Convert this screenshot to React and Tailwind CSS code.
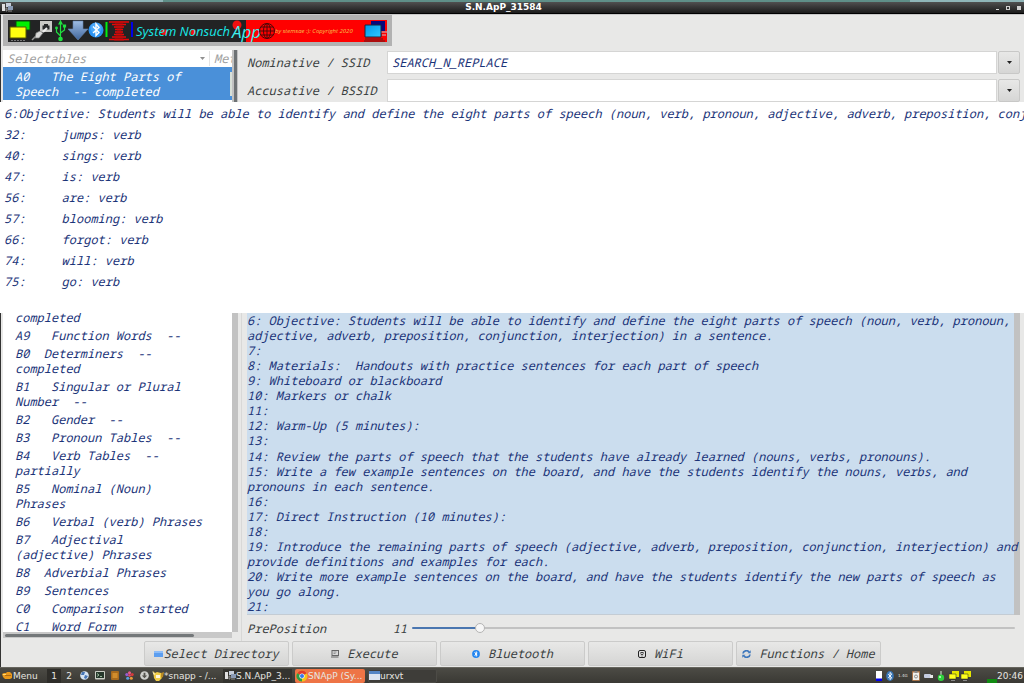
import React, { useState } from 'react';

const MATCHES = [
  '6:Objective: Students will be able to identify and define the eight parts of speech (noun, verb, pronoun, adjective, adverb, preposition, conjunction, interjection) in a sentence.',
  '32:     jumps: verb',
  '40:     sings: verb',
  '47:     is: verb',
  '56:     are: verb',
  '57:     blooming: verb',
  '66:     forgot: verb',
  '74:     will: verb',
  '75:     go: verb',
];

const TOPICS = [
  'completed',
  'A9   Function Words  --',
  'B0  Determiners  --\ncompleted',
  'B1   Singular or Plural\nNumber  --',
  'B2   Gender  --',
  'B3   Pronoun Tables  --',
  'B4   Verb Tables  --\npartially',
  'B5   Nominal (Noun)\nPhrases',
  'B6   Verbal (verb) Phrases',
  'B7   Adjectival\n(adjective) Phrases',
  'B8  Adverbial Phrases',
  'B9  Sentences',
  'C0   Comparison  started',
  'C1   Word Form',
];

const LESSON = [
  '6: Objective: Students will be able to identify and define the eight parts of speech (noun, verb, pronoun,\nadjective, adverb, preposition, conjunction, interjection) in a sentence.',
  '7:',
  '8: Materials:  Handouts with practice sentences for each part of speech',
  '9: Whiteboard or blackboard',
  '10: Markers or chalk',
  '11:',
  '12: Warm-Up (5 minutes):',
  '13:',
  '14: Review the parts of speech that the students have already learned (nouns, verbs, pronouns).',
  '15: Write a few example sentences on the board, and have the students identify the nouns, verbs, and\npronouns in each sentence.',
  '16:',
  '17: Direct Instruction (10 minutes):',
  '18:',
  '19: Introduce the remaining parts of speech (adjective, adverb, preposition, conjunction, interjection) and\nprovide definitions and examples for each.',
  '20: Write more example sentences on the board, and have the students identify the new parts of speech as\nyou go along.',
  '21:',
];

const ACTIONS = [
  { label: 'Select Directory', icon: FolderIcon, gap: 'gap-0' },
  { label: 'Execute', icon: DriveIcon, gap: 'gap-2' },
  { label: 'Bluetooth', icon: BluetoothDot, gap: 'gap-2' },
  { label: 'WiFi', icon: WifiIcon, gap: 'gap-2' },
  { label: 'Functions / Home', icon: RefreshIcon, gap: 'gap-2' },
];

export default function App() {
  return (
    <div className="flex h-screen flex-col overflow-hidden bg-[#e8e8e7] font-['Noto_Sans_Mono','DejaVu_Sans_Mono',monospace] text-[12px] leading-[15px] text-[#1a3378] italic">
      <div className="flex h-0.5 shrink-0">
        <div className="w-[163px] bg-[#8fb5b8]" />
        <div className="flex-1 bg-[#5f8f88]" />
        <div className="w-[114px] bg-[#8fb5b8]" />
      </div>
      <TitleBar />
      <TopPane />
      <MatchList />
      <BottomPane />
      <ActionBar />
      <TaskBar />
    </div>
  );
}

function TitleBar() {
  return (
    <header className="flex h-3 shrink-0 items-center border-b border-black bg-gradient-to-b from-[#505050] to-[#1c1c1c] px-0.5 font-['DejaVu_Sans',sans-serif] text-[9px] leading-[11px] not-italic text-white">
      <div className="flex-1">
        <AppIcon />
      </div>
      <h1 className="mr-4 font-bold">S.N.ApP_31584</h1>
      <div className="flex flex-1 items-center justify-end gap-[7px] pr-px">
        <button aria-label="Minimize" className="h-1 w-[3px] border-b border-[#e0e0e0]" />
        <button aria-label="Maximize" className="size-1 border border-[#d0d0d0]" />
        <button aria-label="Close" className="size-1 bg-[#d0d0d0]" />
      </div>
    </header>
  );
}

function TopPane() {
  return (
    <section className="flex h-[88px] shrink-0 flex-col overflow-hidden border-t border-l border-t-[#c8c8c8] border-l-[#333]">
      <div className="ml-0.5 flex h-[31px] w-[389px] shrink-0 items-center bg-[#b2b2b2] px-[5px]">
        <Banner />
      </div>
      <div className="mt-0.5 flex min-h-0 flex-1 gap-2 pl-0.5">
        <div className="mt-0.5 flex w-[235px] shrink-0">
          <div className="flex min-w-0 flex-1 flex-col bg-white">
            <div className="flex h-[17px] shrink-0 items-center text-[#a0a0a0]">
              <button className="flex flex-1 items-center justify-between border-r border-[#e4e4e4] pr-1 pl-1 text-left italic">
                Selectables
                <Caret className="text-[#909090]" />
              </button>
              <button className="w-[22px] overflow-hidden pl-1 text-left italic">Met</button>
            </div>
            <button className="flex h-[33px] shrink-0 items-center justify-between bg-[#4a90d9] pl-3 text-left whitespace-pre text-white italic">
              {'A0   The Eight Parts of\nSpeech  -- completed'}
              <span className="h-6 w-0.5 bg-[#d8e0d8]" />
            </button>
          </div>
          <div className="flex w-1.5 justify-center bg-[#c2c2c2]">
            <div className="w-[3px] bg-[#6e7274]" />
          </div>
        </div>
        <div className="flex min-w-0 flex-1 flex-col gap-[5px] pt-[3px] pr-1 pl-px">
          <ComboRow id="nominative" label="Nominative / SSID" initial="SEARCH_N_REPLACE" />
          <ComboRow id="accusative" label="Accusative / BSSID" initial="" />
        </div>
      </div>
    </section>
  );
}

function ComboRow({ id, label, initial }) {
  const [value, setValue] = useState(initial);
  return (
    <div className="flex h-[23px] shrink-0 items-center">
      <label htmlFor={id} className="w-[140px] text-[#3a3f41]">{label}</label>
      <input
        id={id}
        value={value}
        onChange={e => setValue(e.target.value)}
        className="h-[23px] min-w-0 flex-1 border border-[#d5d5d4] bg-white px-1 italic outline-none"
      />
      <button
        aria-label={`${label} history`}
        className="ml-px flex h-[23px] w-[22px] items-center justify-center rounded-xs border border-[#c8c8c7] bg-gradient-to-b from-[#e8e8e7] to-[#d6d6d5]"
      >
        <Caret className="text-[#222]" />
      </button>
    </div>
  );
}

function MatchList() {
  return (
    <ul className="h-[211px] shrink-0 overflow-hidden bg-white pt-px pl-1">
      {MATCHES.map(m => (
        <li key={m} className="leading-[21px] whitespace-pre">{m}</li>
      ))}
    </ul>
  );
}

function BottomPane() {
  return (
    <section className="flex min-h-0 flex-1 border-l border-[#333] pl-0.5">
      <div className="flex w-[235px] shrink-0 flex-col pb-[3px]">
        <div className="flex min-h-0 flex-1">
          <ul className="-mt-[3px] min-w-0 flex-1 overflow-hidden bg-white pl-3 [clip-path:inset(3px_0_0_0)]">
            {TOPICS.map(t => (
              <li key={t} className="pb-[3px] whitespace-pre">{t}</li>
            ))}
          </ul>
          <div className="w-1.5 bg-[#c2c2c2]" />
        </div>
        <div className="mr-1.5 flex h-1.5 shrink-0 items-center bg-[#c8c8c8] pl-0.5">
          <div className="h-[3px] w-[189px] rounded-full bg-[#737779]" />
        </div>
      </div>
      <div className="ml-[3px] flex min-w-0 flex-1 flex-col border-l border-[#d8d8d7] pr-1 pl-[5px]">
        <div className="flex min-h-0 flex-1">
          {/* sits above the scrollbar so the longest line stays readable */}
          <div className="z-10 flex min-w-0 flex-1 flex-col justify-between border-b border-[#c4ccd4] bg-[#cbddee]">
            {LESSON.map(line => (
              <p key={line} className="whitespace-pre">{line}</p>
            ))}
          </div>
          <div className="w-1.5 bg-[#c2c2c2]" />
        </div>
        <PrePosition />
      </div>
    </section>
  );
}

function PrePosition() {
  const [value, setValue] = useState(11);
  const max = 103;
  const filled = (value / max) * 100;
  return (
    <div className="flex h-[26px] shrink-0 items-center text-[#3a3f41]">
      <label htmlFor="preposition" className="flex-1">PrePosition</label>
      <output htmlFor="preposition" className="mr-[5px]">{value}</output>
      <input
        id="preposition"
        type="range"
        min={0}
        max={max}
        value={value}
        onChange={e => setValue(Number(e.target.value))}
        className="mr-[5px] h-0.5 w-[78%] appearance-none rounded-full [&::-webkit-slider-thumb]:size-2.5 [&::-webkit-slider-thumb]:appearance-none [&::-webkit-slider-thumb]:rounded-full [&::-webkit-slider-thumb]:border [&::-webkit-slider-thumb]:border-[#b4b4b4] [&::-webkit-slider-thumb]:bg-[#f6f6f6]"
        style={{ background: `linear-gradient(to right, #4a76b0 ${filled}%, #c2c2c2 ${filled}%)` }}
      />
    </div>
  );
}

function ActionBar() {
  return (
    <div className="flex h-[26px] shrink-0 justify-center gap-[3px] border-l border-[#333] pb-px">
      {ACTIONS.map(({ label, icon: Icon, gap }) => (
        <button
          key={label}
          className={`flex w-[145px] items-center justify-center rounded-xs border border-[#cbcbca] bg-gradient-to-b from-[#e8e8e7] to-[#d5d5d4] whitespace-nowrap text-[#3a3f41] italic ${gap}`}
        >
          <Icon />
          {label}
        </button>
      ))}
    </div>
  );
}

function TaskBar() {
  return (
    <footer className="flex h-4 shrink-0 items-center border-t border-[#66655e] bg-gradient-to-b from-[#4c4b45] to-[#3a3934] font-['DejaVu_Sans',sans-serif] text-[9px] leading-3 not-italic text-[#e6e5e0]">
      <button className="ml-0.5 flex w-[45px] items-center gap-px">
        <svg viewBox="0 0 10 8" className="h-2 w-2.5">
          <path d="M0 2 2 1 4 1 5 0 8 0 10 2V6L8 7H3L1 5Z" fill="#e8981c" />
          <path d="M3 3H9V4H3Z" fill="#b06a10" />
          <path d="M1 2H4V3H1Z" fill="#ffd770" />
        </svg>
        Menu
      </button>
      <button className="h-3.5 w-[14px] bg-[#2e2d29]">1</button>
      <button className="h-3.5 w-4">2</button>
      <div className="ml-[3px] flex w-[72px] items-center gap-1.5">
        <svg viewBox="0 0 9 9" className="size-[9px]">
          <circle cx="4.500" cy="4.500" r="4.300" fill="#d5e2f2" />
          <path d="M2 1 5 1 4 4 1 4ZM5 4 8 5 6 8 4 7Z" fill="#4675b5" />
        </svg>
        <svg viewBox="0 0 10 9" className="h-[9px] w-2.5">
          <rect width="10" height="8.500" rx="1" fill="#c8ccc4" />
          <rect x="1" y="1" width="8" height="6" fill="#26382c" />
          <path d="M2 2.500 4 4 2 5.500M5 5.500H7" stroke="#b8d8b8" fill="none" strokeWidth=".8" />
        </svg>
        <svg viewBox="0 0 8 9" className="h-[9px] w-2">
          <rect width="8" height="9" rx="1" fill="#a86a1c" />
          <path d="M1.500 2H6.500V7H1.500Z" fill="#d08c2c" />
        </svg>
        <svg viewBox="0 0 10 10" className="size-[9px]">
          <circle cx="5" cy="2" r="1.700" fill="#e85a8a" />
          <circle cx="8" cy="4" r="1.700" fill="#d83a3a" />
          <circle cx="7" cy="8" r="1.700" fill="#e89a3a" />
          <circle cx="3" cy="8" r="1.700" fill="#58a0e0" />
          <circle cx="2" cy="4" r="1.700" fill="#9a5ad0" />
          <circle cx="5" cy="5" r="1.500" fill="#e04a70" />
        </svg>
        <svg viewBox="0 0 10 10" className="size-[9px]">
          <circle cx="5" cy="5" r="4.800" fill="#d0d0cc" />
          <path d="M4 2H6V5H8L5 8 2 5H4Z" fill="#55544e" />
        </svg>
      </div>
      <div className="flex gap-[3px]">
        <button className="flex h-3.5 w-[68px] items-center overflow-hidden whitespace-nowrap">
          <svg viewBox="0 0 12 12" className="size-3 shrink-0">
            <path d="M1 1 3 3 5 2 9 3 10 8 7 11H4L2 8Z" fill="#f0cc48" />
            <path d="M0 1 3 4 2 5ZM4 5H8V8H4Z" fill="#fff6dc" />
            <path d="M9 3 12 2 11 7 9 8Z" fill="#b88a24" />
          </svg>
          *snapp - /...
        </button>
        <button className="flex h-3.5 w-[69px] items-center bg-[#34332f] pl-0.5 whitespace-nowrap">
          <AppIcon />
          S.N.ApP_3...
        </button>
        <button className="flex h-3.5 w-[70px] items-center rounded-xs bg-[#ee7446] pl-px whitespace-nowrap">
          <ChromeIcon />
          SNApP (Sy...
        </button>
        <button className="flex h-3.5 w-[69px] items-center rounded-xs border border-[#4c4b46] bg-[#3e3d39] whitespace-nowrap">
          <svg viewBox="0 0 11 9" className="h-[9px] w-[11px]">
            <rect width="11" height="9" fill="#dce4f0" />
            <rect width="11" height="3" fill="#5585c4" />
          </svg>
          urxvt
        </button>
      </div>
      <div className="ml-auto flex h-full items-center">
        <Tray />
        <span className="h-1 w-2.5 self-end bg-[#118a11]" />
        <time className="mr-px">20:46</time>
      </div>
    </footer>
  );
}

function Tray() {
  return (
    <div className="mr-4 flex items-center gap-1">
      <svg viewBox="0 0 6 10" className="h-2.5 w-1.5">
        <rect width="6" height="10" fill="#fff" />
        <rect y="7.500" width="6" height="2.500" fill="#0000f0" />
      </svg>
      <BluetoothBadge className="h-2.5 w-2" />
      <span className="w-[10px] text-[4px]">1.4G</span>
      <svg viewBox="0 0 8 10" className="h-2.5 w-2">
        <rect width="8" height="10" rx="1" fill="#a8744a" />
        <rect x="1" y="1.500" width="6" height="7.500" fill="#eeeeea" />
        <rect x="2.500" width="3" height="2" fill="#888" />
        <circle cx="4" cy="5.500" r="1.500" fill="none" stroke="#777" strokeWidth=".8" />
      </svg>
      <svg viewBox="0 0 9 6" className="h-1.5 w-[9px]">
        <rect y="1" width="7" height="4" rx="1" fill="#c4cce0" />
        <rect x="6" y="2" width="3" height="3" fill="#e8e8e8" />
      </svg>
      <svg viewBox="0 0 8 10" className="h-2.5 w-2">
        <path d="M3.500 0H4.500V4H3.500Z" fill="#d8f0d8" />
        <circle cx="4" cy="6.700" r="3.200" fill="#2ecf3c" />
        <circle cx="3" cy="6" r="1" fill="#c8ffd0" />
      </svg>
      <div className="flex gap-0.5">
        <Screens />
        <Screens />
      </div>
    </div>
  );
}

function Screens() {
  return (
    <svg viewBox="0 0 10 10" className="size-2.5">
      <path d="M3 0H10V6H3Z" fill="#e6e600" />
      <path d="M0 3H7V8H0Z" fill="#ffff20" stroke="#222" strokeWidth=".5" />
      <path d="M2 9H6V10H2Z" fill="#888" />
    </svg>
  );
}

function Banner() {
  return (
    <svg viewBox="0 0 379 22" className="h-[22px] w-full" role="img" aria-label="System Nonsuch App">
      <rect width="238" height="22" fill="#222324" />
      <rect x="238" width="141" height="22" fill="#ff0000" />

      {/* terminals */}
      <path d="M8 1H22V10H8Z" fill="#00f000" stroke="#08480c" />
      <path d="M2 7H18V18H2Z" fill="#ffff10" stroke="#555500" />
      <path d="M3 20.500H18" stroke="#777" strokeDasharray="2 1" />

      {/* plug and port */}
      <path d="M32 1H44V12H32Z" fill="#c9c9c6" />
      <path d="M34.500 9.500V5.500H36V4H40V5.500H41.500V9.500Z" fill="#26282a" />
      <path d="M24 20 29 15" stroke="#999" strokeWidth="1.500" />
      <path d="M28 13 32 11 35 13 31 18 27 18Z" fill="#d8d8d8" stroke="#777" strokeWidth=".7" />
      <path d="M35 12 39 8" stroke="#eee" strokeWidth="2" />

      {/* usb */}
      <g stroke="#20e040" strokeWidth="1.200" fill="none">
        <path d="M52.500 3V18M52.500 16 48.500 12V8M52.500 13 56.500 10V6" />
        <circle cx="52.500" cy="19" r="1.700" fill="#20e040" />
        <circle cx="48.500" cy="8" r=".8" fill="#20e040" />
        <path d="M55.500 5H57.500V7H55.500ZM51 4 52.500 1 54 4Z" fill="#20e040" />
      </g>

      {/* download arrow */}
      <defs>
        <linearGradient id="arrow" x1="0" y1="0" x2="0" y2="1">
          <stop offset="0" stopColor="#9ebce4" />
          <stop offset="1" stopColor="#3f659c" />
        </linearGradient>
        <linearGradient id="monitor" x1="0" y1="0" x2="1" y2="1">
          <stop offset="0" stopColor="#0098e8" />
          <stop offset="1" stopColor="#30c8ff" />
        </linearGradient>
      </defs>
      <path d="M65 1H75V9H80L70 20 60 9H65Z" fill="url(#arrow)" stroke="#6483ae" strokeWidth=".6" />

      {/* bluetooth */}
      <circle cx="88" cy="10" r="7.500" fill="#2a93f4" />
      <circle cx="88" cy="8" r="5.500" fill="#62b4fa" opacity=".6" />
      <path d="M85 6.500 91 12.500 88 15.500V4L91 7.500 85 13" stroke="#fff" fill="none" strokeWidth="1.400" />

      {/* red coil between two bars */}
      <path d="M98.500 2V17" stroke="#00f010" strokeWidth="2" />
      <path d="M124 2V17" stroke="#0000e8" strokeWidth="2" />
      <path
        d="M101 2H121M104 4.500H118M106 7H116M107 9.500H115M107 12H115M106 14.500H116M104 17H118M101 19.500H121"
        stroke="#e80808"
        strokeWidth="1.600"
      />
      <path d="M106 1H116L113 10 116 21H106L109 10Z" fill="#c80808" opacity=".55" />

      <circle cx="156" cy="12" r="3" fill="#f01010" />
      <circle cx="185" cy="12" r="3" fill="#f01010" />
      <circle cx="229" cy="5" r="4.500" fill="#f01010" />
      <text x="128" y="16" className="fill-[#18e8e8] font-['Open_Sans',sans-serif] text-[13px]">System Nonsuch</text>
      <text x="224" y="18" className="fill-[#40f0f0] font-['Open_Sans',sans-serif] text-[17px]">App</text>

      {/* globe */}
      <g fill="none" stroke="#4a0808" strokeWidth="1">
        <circle cx="259" cy="11" r="7.500" />
        <ellipse cx="259" cy="11" rx="3.500" ry="7.500" />
        <path d="M259 3.500V18.500M251.500 11H266.500M253 7H265M253 15H265" />
      </g>
      <text x="267" y="13" className="fill-[#f8c050] font-['Open_Sans',sans-serif] text-[6px]">by stemsae :): Copyright 2020</text>

      {/* monitors */}
      <path d="M363 1H377V11H363Z" fill="#08087c" />
      <path d="M373 12H379M374 15H378" stroke="#c8c8c8" />
      <path d="M357 5H373V17H357Z" fill="url(#monitor)" stroke="#18283c" />
      <path d="M357 19H375M356 21H377" stroke="#5a1c1c" />
    </svg>
  );
}

function Caret({ className }) {
  return (
    <svg viewBox="0 0 5 3" className={`h-[3px] w-[5px] ${className}`}>
      <path d="M0 0H5L2.500 3Z" fill="currentColor" />
    </svg>
  );
}

function AppIcon() {
  return (
    <svg viewBox="0 0 11 9" className="h-[9px] w-[11px] shrink-0">
      <rect y="1" width="3" height="7" fill="#e0e0e0" />
      <rect x="4" width="5" height="4" fill="#c4ccd8" />
      <rect x="6" y="3" width="5" height="4" fill="#8a9ab4" />
      <path d="M4 5H5V8H4ZM6 8H10" stroke="#b8b8b8" strokeWidth=".7" />
    </svg>
  );
}

function ChromeIcon() {
  return (
    <svg viewBox="0 0 12 12" className="size-3 shrink-0">
      <circle cx="6" cy="6" r="5.500" fill="#f5c518" />
      <path d="M6 6 1.200 3.200A5.500 5.500 0 0 1 10.800 3.200Z" fill="#e03c2c" />
      <path d="M6 6 1.200 3.200A5.500 5.500 0 0 0 6 11.500Z" fill="#2c9c48" />
      <circle cx="6" cy="6" r="2.600" fill="#fff" />
      <circle cx="6" cy="6" r="2" fill="#3878e8" />
    </svg>
  );
}

function BluetoothBadge({ className }) {
  return (
    <svg viewBox="0 0 8 10" className={className}>
      <ellipse cx="4" cy="5" rx="3.800" ry="5" fill="#3a78b8" />
      <path d="M2.200 3.200 5.800 6.800 4 8.500V1.500L5.800 3.200 2.200 6.800" stroke="#fff" fill="none" strokeWidth=".9" />
    </svg>
  );
}

function FolderIcon() {
  return (
    <svg viewBox="0 0 9 6" className="h-1.5 w-[9px]">
      <rect width="9" height="6" rx=".5" fill="#5c9ef0" />
      <rect y="0" width="9" height="2" fill="#8cbcf8" />
    </svg>
  );
}

function DriveIcon() {
  return (
    <svg viewBox="0 0 8 8" className="size-2">
      <rect x="1" y=".5" width="6.500" height="5" fill="#d8d8d8" stroke="#666" />
      <path d="M2.500 2H5.500M2.500 3.500H4.500" stroke="#777" strokeWidth=".7" />
      <path d="M0 7H7.500" stroke="#777" strokeWidth="1.200" />
    </svg>
  );
}

function BluetoothDot() {
  return (
    <svg viewBox="0 0 8 8" className="size-2">
      <circle cx="4" cy="4" r="3.900" fill="#2486f0" />
      <path d="M2.500 2.500 5.200 5.200 4 6.300V1.700L5.200 2.800 2.500 5.500" stroke="#fff" fill="none" strokeWidth=".9" />
    </svg>
  );
}

function WifiIcon() {
  return (
    <svg viewBox="0 0 8 8" className="size-2">
      <rect x=".5" y=".5" width="7" height="7" rx="1.500" fill="#e0e0e0" stroke="#222" />
      <path d="M2 3.200Q4 1.500 6 3.200M2.800 4.700Q4 3.700 5.200 4.700M3.500 6H4.500" stroke="#222" fill="none" strokeWidth=".9" />
    </svg>
  );
}

function RefreshIcon() {
  return (
    <svg viewBox="0 0 9 8" className="h-2 w-[9px]">
      <path d="M1 3.500A3.300 3 0 0 1 7 2M8 4.500A3.300 3 0 0 1 2 6" stroke="#3f78bc" fill="none" strokeWidth="1.700" />
      <path d="M5.500 3.200H8.700V.2ZM3.500 4.800H.3V7.800Z" fill="#3f78bc" />
    </svg>
  );
}
